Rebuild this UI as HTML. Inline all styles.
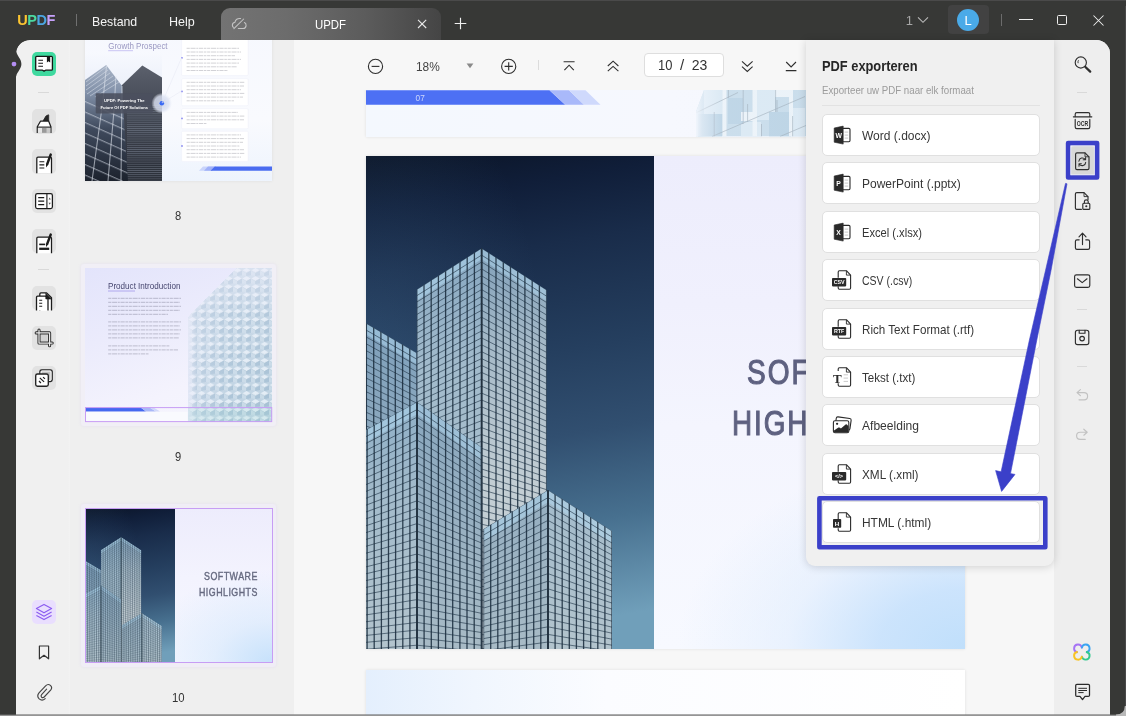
<!DOCTYPE html>
<html lang="nl">
<head>
<meta charset="utf-8">
<title>UPDF</title>
<style>
*{box-sizing:border-box;margin:0;padding:0}
html,body{width:1126px;height:716px;overflow:hidden;background:#373836}
body{font-family:"Liberation Sans",sans-serif;position:relative;color:#222}
#win{will-change:transform;position:absolute;left:0;top:0;width:1126px;height:716px;background:#373836;overflow:hidden}
.t{position:absolute;white-space:nowrap;line-height:1;transform-origin:0 0;display:block}
svg{position:absolute;overflow:visible}
.a{position:absolute}
/* title bar */
#tab{position:absolute;left:221px;top:8px;width:220px;height:32px;border-radius:9px 9px 0 0;background:linear-gradient(90deg,#737373 0%,#6c6c6c 30%,#5c5c5c 65%,#454545 100%)}
/* content */
#content{position:absolute;left:16px;top:40px;width:1094px;height:675px;background:#f7f7f7;border-radius:14px 14px 0 0;overflow:hidden}
#ltool{position:absolute;left:16px;top:40px;width:54px;height:675px;background:#f0f0f0;border-radius:14px 0 0 0}
#thumbs{position:absolute;left:70px;top:40px;width:224px;height:675px;background:#efefef;overflow:hidden}
#main{position:absolute;left:294px;top:40px;width:761px;height:675px;background:#f7f7f7;overflow:hidden}
#rtool{position:absolute;left:1054px;top:40px;width:56px;height:675px;background:#eeeeee;border-radius:0 14px 0 0}
.ib{position:absolute;left:32px;width:24px;height:24px;border-radius:5px;background:#e2e2e2}
.sep{position:absolute;height:1px;background:#d9d9d9}
/* export panel */
#panel{position:absolute;left:806px;top:40px;width:248px;height:526px;background:#f0f0f0;border-radius:0 0 9px 9px;box-shadow:0 1px 8px rgba(0,0,0,.16)}
.it{position:absolute;left:822px;width:218px;height:42px;background:#fff;border:1px solid #e0e0e0;border-radius:5px}
.pg{position:absolute;left:366px;width:599px;background:#fff;box-shadow:0 0 3px rgba(0,0,0,.10)}
</style>
</head>
<body>
<div id="win">
<!-- title bar -->
<div class="a" style="left:0;top:0;width:1126px;height:1px;background:#4a4a4a"></div>
<div class="t" style="left:17.3px;top:12.9px;font-size:14.5px;font-weight:bold;letter-spacing:-.45px"><span style="color:#fcc531">U</span><span style="color:#4bd8a0">P</span><span style="color:#4ba6e2">D</span><span style="color:#c7a1fb">F</span></div>
<div class="a" style="left:76px;top:14px;width:1px;height:12px;background:#707070"></div>
<div class="t" style="left:92.30px;top:15.10px;font-size:13px;color:#f4f4f4;transform:scaleX(0.9475);">Bestand</div>
<div class="t" style="left:168.70px;top:15.10px;font-size:13px;color:#f4f4f4;transform:scaleX(0.9649);">Help</div>
<div id="tab"></div>
<svg style="left:231px;top:17px" width="16" height="13" viewBox="231 17 16 13"><g fill="none" stroke="#c4c4c4" stroke-width="1.05" stroke-linecap="round"><path d="M240.6 18.5C237.6 18 235.3 19.7 234.9 22.3C233.2 22.7 232.2 24 232.4 25.6C232.5 26.4 232.9 27 233.4 27.4"/><path d="M244.4 22.6C245.6 23.1 246.2 24.3 246.1 25.6C245.9 27.3 244.7 28.5 243.2 28.5H238.3"/><path d="M243.7 19L233.9 28.7"/></g></svg>
<div class="t" style="left:315.20px;top:17.80px;font-size:13px;color:#ffffff;transform:scaleX(0.8760);">UPDF</div>
<svg style="left:417px;top:19px" width="10" height="10" viewBox="0 0 10 10"><path d="M1 .8L9.2 9M9.2 .8L1 9" stroke="#e8e8e8" stroke-width="1.1" fill="none"/></svg>
<svg style="left:454px;top:17px" width="13" height="13" viewBox="0 0 13 13"><path d="M6.5 .7V12.3M.7 6.5H12.3" stroke="#f0f0f0" stroke-width="1.15" fill="none"/></svg>
<div class="t" style="left:905.80px;top:13.60px;font-size:13px;color:#a6a6a6;">1</div>
<svg style="left:917px;top:16px" width="12" height="8" viewBox="0 0 12 8"><path d="M1 1.3L6 6.3L11 1.3" stroke="#b8b8b8" stroke-width="1.1" fill="none"/></svg>
<div class="a" style="left:948px;top:5px;width:41px;height:29px;border-radius:4px;background:#424242"></div>
<div class="a" style="left:957px;top:9px;width:22px;height:22px;border-radius:11px;background:#4aaae8"></div>
<div class="t" style="left:964.60px;top:13.60px;font-size:13px;color:#ffffff;">L</div>
<div class="a" style="left:1001px;top:14px;width:1px;height:12px;background:#6c6c6c"></div>
<div class="a" style="left:1019px;top:19px;width:14px;height:1px;background:#efefef"></div>
<div class="a" style="left:1057px;top:15px;width:10px;height:10px;border:1px solid #eee;border-radius:1.5px"></div>
<svg style="left:1093px;top:15px" width="11" height="11" viewBox="0 0 11 11"><path d="M.5 .5L10.5 10.5M10.5 .5L.5 10.5" stroke="#eee" stroke-width="1.05" fill="none"/></svg>
<!-- content bg -->
<div id="content"></div>
<!-- left toolbar -->
<div id="ltool"></div>
<div class="a" style="left:68px;top:40px;width:5px;height:675px;background:linear-gradient(90deg,#f0f0f0,#f3f3f3 50%,#efefef)"></div>
<div class="ib" style="top:52px;background:#3fd99f"></div>
<div class="sep" style="left:38px;top:92px;width:11px"></div>
<div class="ib" style="top:109px;height:25px"></div>
<div class="ib" style="top:149px;height:25px"></div>
<div class="ib" style="top:189px"></div>
<div class="ib" style="top:229px"></div>
<div class="sep" style="left:38px;top:269px;width:11px"></div>
<div class="ib" style="top:286px"></div>
<div class="ib" style="top:326px"></div>
<div class="ib" style="top:366px"></div>
<div class="ib" style="top:600px;background:#e9defe"></div>
<svg style="left:0;top:0" width="80" height="716" viewBox="0 0 80 716">
<path d="M14 40H30C22.5 40.3 17.6 44.6 16.3 51.6C17.2 56.4 21.4 59 21.4 64C21.4 69 17.2 71.6 16.2 76.2L14 76Z" fill="#373836"/>
<circle cx="14" cy="64.1" r="2.4" fill="#b48ef3"/>
<!-- reader (open book) -->
<path d="M35.7 57.3Q35.7 56.3 36.7 56.3H51.4Q52.4 56.3 52.4 57.3V69.2Q52.4 70.2 51.4 70.2H45.6L44.05 71.1L42.5 70.2H36.7Q35.7 70.2 35.7 69.2Z" fill="#fff" stroke="#151515" stroke-width="1.3" stroke-linejoin="round"/>
<path d="M38.3 60.2H43M38.3 63.2H43M38.3 66.2H43" stroke="#151515" stroke-width="1.15"/>
<path d="M46.9 56.3H50.2V62.6L48.55 61.2L46.9 62.6Z" fill="#151515"/>
<!-- highlighter -->
<g transform="translate(0 -0.5)">
<path d="M43 121.6L45.9 116.6L48.3 115.3Q48.7 115.2 48.7 115.7V121.6Z" fill="#262626" stroke="#262626" stroke-width=".8" stroke-linejoin="round"/>
<path d="M37.3 133.4V127.2L40.6 121.5H48.6L50.9 127.2V133.4" fill="#fff" stroke="#1c1c1c" stroke-width="1.25" stroke-linejoin="round"/>
<path d="M37.9 128.2H50.3V133.4H37.9Z" fill="#9a9a9a"/>
<path d="M37.9 128.2H42V133.4H37.9Z" fill="#e6e6e6"/><path d="M46.5 128.2H50.3V133.4H46.5Z" fill="#c9c9c9"/>
<path d="M37.3 127.6H50.9" stroke="#1c1c1c" stroke-width="1.1"/>
</g>
<!-- edit -->
<g transform="translate(0 -0.4)">
<path d="M36.8 173.6V158.6Q36.8 157.4 38 157.4H50.3Q51.5 157.4 51.5 158.6V173.6" fill="#fff" stroke="#1c1c1c" stroke-width="1.25"/>
<path d="M39.4 162.2H44.3M39.4 165.3H44.3M39.4 168.4H44.3" stroke="#1c1c1c" stroke-width="1.1"/>
<path d="M50.7 155L47.3 164.3" stroke="#1c1c1c" stroke-width="2.5" stroke-linecap="round"/>
<path d="M46.1 164L48.4 164.9L46 167.8Z" fill="#1c1c1c"/>
</g>
<!-- organise -->
<rect x="35.6" y="193.6" width="16.8" height="15" rx="1.8" fill="#fff" stroke="#1c1c1c" stroke-width="1.25"/>
<path d="M46.9 193.6V208.6" stroke="#1c1c1c" stroke-width="1.1"/>
<path d="M38.2 197.6H44.2M38.2 201.1H44.2M38.2 204.6H44.2" stroke="#1c1c1c" stroke-width="1.1"/>
<path d="M48.6 199.6L49.7 197.6L50.8 199.6ZM48.6 202.8L49.7 204.8L50.8 202.8Z" fill="#555"/>
<!-- form/sign -->
<path d="M36.8 253.2V238.2Q36.8 237 38 237H50.3Q51.5 237 51.5 238.2V253.2" fill="#fff" stroke="#1c1c1c" stroke-width="1.25"/>
<path d="M39.2 244.4H45.2" stroke="#1c1c1c" stroke-width="1.6"/>
<path d="M39.2 248.8H49.2" stroke="#1c1c1c" stroke-width="2.3"/>
<path d="M50.7 234.6L47.3 243.6" stroke="#1c1c1c" stroke-width="2.5" stroke-linecap="round"/>
<path d="M46.1 243.3L48.4 244.2L46 247.1Z" fill="#1c1c1c"/>
<!-- pages -->
<path d="M39.8 310.4V294Q39.8 292.9 40.9 292.9H46.6L51.5 297.8V310.4" fill="#fff" stroke="#1c1c1c" stroke-width="1.3" stroke-linejoin="round"/>
<path d="M36.5 310.4V297.2Q36.5 296.1 37.6 296.1H45.6L48 298.8V310.4" fill="#fff" stroke="#1c1c1c" stroke-width="1.3" stroke-linejoin="round"/>
<path d="M39.2 300.2H42.2M39.2 303.2H42.2M39.2 306.2H42.2" stroke="#1c1c1c" stroke-width="1.15"/>
<path d="M45.8 293.2L51.4 299H45.8Z" fill="#1c1c1c" stroke="#1c1c1c" stroke-width=".6" stroke-linejoin="round"/>
<!-- crop -->
<g fill="none" stroke-linecap="round" stroke-linejoin="round">
<path d="M41 334.9H47.6V341H41Z" fill="#d2d2d2"/>
<path d="M36.2 332.9H49.6V345.8M39 330V343H52.2" stroke="#2a2a2a" stroke-width="3.1"/>
<path d="M36.2 332.9H49.6V345.8M39 330V343H52.2" stroke="#e8e8e8" stroke-width="1.25"/>
</g>
<!-- watermark/layers -->
<rect x="39.9" y="369.8" width="12.3" height="11.8" rx="1.8" fill="#c4c4c4" stroke="#222" stroke-width="1.3"/>
<rect x="41.1" y="371" width="9.9" height="9.4" rx="1" fill="none" stroke="#fff" stroke-width="1"/>
<rect x="35.7" y="374" width="12.6" height="12.2" rx="1.8" fill="#fff" stroke="#222" stroke-width="1.35"/>
<path d="M43.1 377.1L44.9 378.9M39.8 377.9L44.1 381.9M39 381L40.9 383" stroke="#222" stroke-width="1.25"/>
<!-- layers (purple) -->
<g fill="none" stroke="#8b5cf0" stroke-width="1.15" stroke-linejoin="round">
<path d="M44 604.4L51.6 608.6L44 612.8L36.4 608.6Z"/><path d="M36.4 612L44 616.2L51.6 612"/><path d="M36.4 615.4L44 619.6L51.6 615.4"/></g>
<!-- bookmark -->
<path d="M39.4 646H48.6V658.8L44 655.3L39.4 658.8Z" fill="none" stroke="#333" stroke-width="1.2" stroke-linejoin="round"/>
<!-- paperclip -->
<path d="M46.6 689.2L41.6 694.6Q40.4 696 41.6 697.2Q42.9 698.2 44.2 697L50.6 690.2Q52.8 687.6 50.4 685.4Q48 683.4 45.6 685.8L39 692.8Q36.4 696 39.2 698.9Q42.2 701.4 45.2 698.6" fill="none" stroke="#444" stroke-width="1.15" stroke-linecap="round"/>
</svg>
<!-- thumbnails -->
<div id="thumbs"><div class="a" style="left:-70px;top:-40px;width:1126px;height:716px">
<!-- thumb 8 -->
<div class="a" style="left:85px;top:27px;width:187px;height:154px;background:linear-gradient(180deg,#f6f8fe 0%,#f9fafe 60%,#eef4fd 100%);box-shadow:0 0 3px rgba(0,0,0,.08)"></div>
<svg style="left:0;top:0" width="300" height="200" viewBox="0 0 300 200">
<defs>
<linearGradient id="t8sky" x1="0" y1="0" x2="0" y2="1"><stop offset="0" stop-color="#f7f9fe"/><stop offset=".14" stop-color="#f1f4fc"/><stop offset=".5" stop-color="#e4eaf5"/><stop offset="1" stop-color="#cfd8e6"/></linearGradient>
<linearGradient id="t8a" x1="0" y1="0" x2="0" y2="1"><stop offset="0" stop-color="#a9b5c8"/><stop offset=".25" stop-color="#7f8ea6"/><stop offset=".55" stop-color="#3f4a5d"/><stop offset="1" stop-color="#1c222d"/></linearGradient>
<linearGradient id="t8b" x1="0" y1="0" x2="0" y2="1"><stop offset="0" stop-color="#5b606c"/><stop offset=".35" stop-color="#454a56"/><stop offset="1" stop-color="#262a33"/></linearGradient>
<pattern id="t8h" width="4" height="2.1" patternUnits="userSpaceOnUse"><rect width="4" height=".8" fill="#7d8696" opacity=".55"/></pattern>
<pattern id="t8g" width="12.5" height="10.5" patternUnits="userSpaceOnUse" patternTransform="skewY(24)"><rect width="12.5" height="1.3" fill="#dfe6f0" opacity=".5"/></pattern>
<radialGradient id="t8c"><stop offset="0" stop-color="#c9d2ea" stop-opacity=".95"/><stop offset=".7" stop-color="#dde3f3" stop-opacity=".8"/><stop offset="1" stop-color="#eef1fa" stop-opacity="0"/></radialGradient>
<clipPath id="t8clip"><rect x="85" y="52" width="77" height="129"/></clipPath>
</defs>
<rect x="85" y="52" width="77" height="129" fill="url(#t8sky)"/>
<g clip-path="url(#t8clip)">
<polygon points="142.3,65.4 121.5,85.5 121.5,181 162,181 162,77.5" fill="url(#t8b)"/>
<polygon points="127,104 162,104 162,181 127,181" fill="url(#t8h)"/>
<polygon points="106.2,65 85,80 85,181 128,181 122,86" fill="url(#t8a)"/>
<polygon points="85,92 123,110 128,181 85,181" fill="url(#t8g)"/>
<path d="M106.5 66L103 100L92 181M116 76L114 110L108 181M122 86L121 181" stroke="#e3e8f0" stroke-width="1.1" opacity=".6" fill="none"/>
<path d="M86 82L106 67M86 86L108 70M86 90L110 73M87 94L113 76M90 96L116 79M95 97L119 82" stroke="#d5dce8" stroke-width=".7" opacity=".8" fill="none"/>
</g>
<rect x="95.7" y="93.3" width="57" height="20.2" rx="1" fill="#4b505f" opacity=".88"/>
<circle cx="161.8" cy="103.3" r="10.5" fill="url(#t8c)"/>
<circle cx="161.8" cy="103.3" r="2.3" fill="#3a6af4"/>
<text x="124.2" y="102.2" text-anchor="middle" font-family="Liberation Sans, sans-serif" font-weight="bold" font-size="4.1" fill="#fff">UPDF: Powering The</text>
<text x="124.2" y="108.6" text-anchor="middle" font-family="Liberation Sans, sans-serif" font-weight="bold" font-size="4.1" fill="#fff">Future Of PDF Solutions</text>
<text x="108.2" y="49.2" font-family="Liberation Sans, sans-serif" font-size="8.3" fill="#9a98c2" textLength="59.4" lengthAdjust="spacingAndGlyphs">Growth Prospect</text>
<path d="M108.2 50.7H133" stroke="#c4bff2" stroke-width=".9"/>
<!-- cards -->
<g fill="#fff" stroke="#eef0f8" stroke-width=".6">
<rect x="181.6" y="38" width="66.6" height="37.6" rx="1.2"/><rect x="181.6" y="78.6" width="66.6" height="27.2" rx="1.2"/><rect x="181.6" y="108.6" width="66.6" height="20.2" rx="1.2"/><rect x="181.6" y="131.2" width="66.6" height="30.2" rx="1.2"/></g>
<g stroke="#5d5d6c" stroke-width=".55" opacity=".5" fill="none" stroke-dasharray="3.2 .7 5.1 .7 1.9 .7 4.2 .7 2.6 .7">
<path d="M186.6 48.3H239M186.6 52H241M186.6 55.7H235M186.6 59.4H241M186.6 63.1H239M186.6 66.8H237M186.6 70.5H228"/>
<path d="M186.6 82.3H245M186.6 86H244M186.6 89.7H241M186.6 93.4H245M186.6 97.1H243M186.6 100.8H234"/>
<path d="M186.6 112.4H238M186.6 116.1H245M186.6 119.8H244M186.6 123.5H207"/>
<path d="M186.6 134.9H241M186.6 138.6H244M186.6 142.3H243M186.6 146H240M186.6 149.7H244M186.6 153.4H245M186.6 157.1H241"/>
</g>
<g fill="#8c8cf0"><circle cx="182" cy="57.8" r=".9"/><circle cx="182" cy="91.4" r=".9"/><circle cx="182" cy="118.4" r=".9"/><circle cx="182" cy="146" r=".9"/></g>
<path d="M162 103L181.5 58M162 103L181.5 91" stroke="#e4e6f2" stroke-width=".5" fill="none"/>
<!-- blue bar -->
<polygon points="203,166.6 215,166.6 211,170.8 199,170.8" fill="#c9d4fb"/>
<polygon points="208,166.6 216,166.6 212,170.8 204,170.8" fill="#9fb0f8"/>
<polygon points="214.8,166.6 272,166.6 272,170.8 210.6,170.8" fill="#4a6cf0"/>
</svg>
<div class="t" style="left:175.00px;top:209.94px;font-size:12px;color:#333;transform:scaleX(0.9290);">8</div>
<!-- thumb 9 -->
<div class="a" style="left:81px;top:264px;width:195px;height:162px;border-radius:3px;background:#f1eff6;box-shadow:0 0 3px rgba(200,180,240,.25)"></div>
<div class="a" style="left:85px;top:268px;width:187px;height:154px;background:linear-gradient(160deg,#e3e4fb 0%,#ebebfc 35%,#f4f3fd 70%,#f6f6fe 100%)"></div>
<svg style="left:0;top:0" width="300" height="440" viewBox="0 0 300 440">
<defs>
<linearGradient id="t9g" x1="0" y1="0" x2="1" y2="0"><stop offset="0" stop-color="#c3d5e3" stop-opacity=".0"/><stop offset=".12" stop-color="#bfd2e1" stop-opacity=".85"/><stop offset="1" stop-color="#a9c3d6"/></linearGradient>
<pattern id="t9p" width="9" height="8.2" patternUnits="userSpaceOnUse" patternTransform="translate(188 268)">
<rect width="9" height="8.2" fill="#bdd2e1"/><polygon points="0,2.4 4.5,0 9,2.4 4.5,4.8" fill="#e3edf5"/><polygon points="0,2.4 4.5,4.8 4.5,8.2 0,7.2" fill="#c6d9e6"/><polygon points="9,2.4 4.5,4.8 4.5,8.2 9,7.2" fill="#a5c0d4"/><path d="M0 2.4L4.5 4.8L9 2.4M4.5 4.8V8.2" stroke="#93b0c6" stroke-width=".35" fill="none" opacity=".7"/>
</pattern>
<linearGradient id="t9f" x1="0" y1="0" x2="1" y2="0"><stop offset="0" stop-color="#eeeefc" stop-opacity=".75"/><stop offset=".1" stop-color="#eeeefc" stop-opacity=".3"/><stop offset=".45" stop-color="#eeeefc" stop-opacity=".08"/><stop offset="1" stop-color="#eeeefc" stop-opacity="0"/></linearGradient>
<linearGradient id="t9v" x1="0" y1="0" x2="0" y2="1"><stop offset="0" stop-color="#efeefc" stop-opacity=".55"/><stop offset=".3" stop-color="#efeefc" stop-opacity=".2"/><stop offset="1" stop-color="#e9eafc" stop-opacity="0"/></linearGradient>
</defs>
<polygon points="237,268 272,268 272,422 188,422 188,318 191.5,313.5" fill="url(#t9p)"/>
<polygon points="237,268 272,268 272,422 188,422 188,318 191.5,313.5" fill="url(#t9f)"/>
<polygon points="237,268 272,268 272,422 188,422 188,318 191.5,313.5" fill="url(#t9v)"/>
<rect x="188" y="408" width="84" height="14" fill="#a6dcd6" opacity=".22"/>
<text x="108" y="289.2" font-family="Liberation Sans, sans-serif" font-size="9.2" fill="#46466f" textLength="72.4" lengthAdjust="spacingAndGlyphs">Product Introduction</text>
<path d="M108 291H135" stroke="#a9a0ec" stroke-width=".9"/>
<g stroke="#55556c" stroke-width=".55" opacity=".6" fill="none" stroke-dasharray="3.2 .7 5.1 .7 1.9 .7 4.2 .7 2.6 .7">
<path d="M108.2 298.3H181M108.2 302.3H180M108.2 306.3H181M108.2 310.3H180M108.2 314.3H168"/>
<path d="M108.2 321.9H181M108.2 325.9H180M108.2 329.9H181M108.2 333.9H180M108.2 337.9H179"/>
<path d="M108.2 345.9H170M108.2 349.9H178M108.2 353.9H149"/>
</g>
<polygon points="85,407.8 141,407.8 146,411.6 85,411.6" fill="#4468f0"/>
<polygon points="141,407.8 150,407.8 156,411.6 146,411.6" fill="#a9b8f8"/><polygon points="150,407.8 154,407.8 160,411.6 156,411.6" fill="#d0d8fb"/>
<rect x="85.5" y="411.9" width="102" height="9.6" fill="#f9fafe"/>
<rect x="85.5" y="407.6" width="186.2" height="14" fill="none" stroke="#c79df4" stroke-width="1"/>
</svg>
<div class="t" style="left:175.00px;top:450.94px;font-size:12px;color:#333;transform:scaleX(0.9290);">9</div>
<!-- thumb 10 -->
<div class="a" style="left:81px;top:504px;width:195px;height:163px;border-radius:3px;background:#f0edf6;box-shadow:0 0 3px rgba(200,180,240,.25)"></div>
<div class="a" style="left:85px;top:508px;width:187px;height:155px;background:radial-gradient(ellipse 70% 60% at 100% 100%,#c6e1fb 0%,rgba(214,232,252,.6) 45%,rgba(240,244,254,0) 100%),linear-gradient(180deg,#edecfc 0%,#f3f3fe 45%,#f6f8ff 100%)"></div>
<svg style="left:85px;top:508px;overflow:hidden" width="90" height="155" viewBox="0 0 288 493" preserveAspectRatio="none"><defs>
<linearGradient id="t_sky" x1="0.1" y1="0" x2="0.2" y2="1">
<stop offset="0" stop-color="#0b1528"/><stop offset=".1" stop-color="#101e39"/><stop offset=".23" stop-color="#192c4a"/><stop offset=".45" stop-color="#253f5f"/><stop offset=".62" stop-color="#314f70"/><stop offset=".8" stop-color="#47708f"/><stop offset="1" stop-color="#709fba"/>
</linearGradient>
<radialGradient id="t_skyl" cx="0" cy="0.42" r="0.62" gradientTransform="scale(1 1)"><stop offset="0" stop-color="#5d93bd" stop-opacity=".2"/><stop offset=".5" stop-color="#5d93bd" stop-opacity=".1"/><stop offset="1" stop-color="#5d93bd" stop-opacity="0"/></radialGradient>
<linearGradient id="t_fa" gradientUnits="userSpaceOnUse" x1="0" y1="90" x2="0" y2="493"><stop offset="0" stop-color="#86a6c0"/><stop offset=".3" stop-color="#a2bbcc"/><stop offset="1" stop-color="#afc1cb"/></linearGradient>
<linearGradient id="t_fb" gradientUnits="userSpaceOnUse" x1="0" y1="90" x2="0" y2="493"><stop offset="0" stop-color="#809fb9"/><stop offset=".25" stop-color="#a6bac8"/><stop offset=".6" stop-color="#c3ced4"/><stop offset="1" stop-color="#c6d0d5"/></linearGradient>
<linearGradient id="t_fc" gradientUnits="userSpaceOnUse" x1="0" y1="240" x2="0" y2="493"><stop offset="0" stop-color="#8daec6"/><stop offset=".4" stop-color="#a3bbcb"/><stop offset="1" stop-color="#b3c4cd"/></linearGradient>
<linearGradient id="t_fd" gradientUnits="userSpaceOnUse" x1="0" y1="160" x2="0" y2="493"><stop offset="0" stop-color="#7d9fbb"/><stop offset=".5" stop-color="#93adc0"/><stop offset="1" stop-color="#a8bbc6"/></linearGradient>
<clipPath id="t_c_b0"><polygon points="-14.0,159.0 -36.0,174.0 -36.0,495.0 -14.0,495.0"/><polygon points="-14.0,159.0 51.0,197.0 51.0,495.0 -14.0,495.0"/></clipPath><clipPath id="t_c_b1"><polygon points="115.6,92.2 50.8,133.5 50.8,495.0 115.6,495.0"/><polygon points="115.6,92.2 180.6,134.0 180.6,495.0 115.6,495.0"/></clipPath><clipPath id="t_c_b2"><polygon points="51.0,246.0 -6.0,277.0 -6.0,495.0 51.0,495.0"/><polygon points="51.0,246.0 115.3,291.0 115.3,495.0 51.0,495.0"/></clipPath><clipPath id="t_c_b3"><polygon points="182.0,334.0 117.5,373.0 117.5,495.0 182.0,495.0"/><polygon points="182.0,334.0 246.0,375.0 246.0,495.0 182.0,495.0"/></clipPath></defs><rect width="288" height="493" fill="url(#t_sky)"/><rect width="288" height="493" fill="url(#t_skyl)"/><g clip-path="url(#t_c_b0)"><g><polygon points="-14.0,159.0 -36.0,174.0 -36.0,495.0 -14.0,495.0" fill="url(#t_fd)"/><polygon points="-14.0,159.0 51.0,197.0 51.0,495.0 -14.0,495.0" fill="url(#t_fd)"/><polygon points="-14.0,159.0 -36.0,174.0 -36.0,185.2 -14.0,170.2" fill="#b4dcf4" opacity=".5"/><polygon points="-14.0,159.0 51.0,197.0 51.0,208.2 -14.0,170.2" fill="#b4dcf4" opacity=".45"/><path d="M-14.0 159.0L-36.0 174.0M-14.0 166.0L-36.0 180.7M-14.0 173.0L-36.0 187.4M-14.0 180.0L-36.0 194.2M-14.0 187.0L-36.0 200.9M-14.0 194.0L-36.0 207.6M-14.0 201.0L-36.0 214.3M-14.0 208.0L-36.0 221.0M-14.0 215.0L-36.0 227.7M-14.0 222.0L-36.0 234.5M-14.0 229.0L-36.0 241.2M-14.0 236.0L-36.0 247.9M-14.0 243.0L-36.0 254.6M-14.0 250.0L-36.0 261.3M-14.0 257.0L-36.0 268.0M-14.0 264.0L-36.0 274.8M-14.0 271.0L-36.0 281.5M-14.0 278.0L-36.0 288.2M-14.0 285.0L-36.0 294.9M-14.0 292.0L-36.0 301.6M-14.0 299.0L-36.0 308.3M-14.0 306.0L-36.0 315.1M-14.0 313.0L-36.0 321.8M-14.0 320.0L-36.0 328.5M-14.0 327.0L-36.0 335.2M-14.0 334.0L-36.0 341.9M-14.0 341.0L-36.0 348.6M-14.0 348.0L-36.0 355.4M-14.0 355.0L-36.0 362.1M-14.0 362.0L-36.0 368.8M-14.0 369.0L-36.0 375.5M-14.0 376.0L-36.0 382.2M-14.0 383.0L-36.0 388.9M-14.0 390.0L-36.0 395.7M-14.0 397.0L-36.0 402.4M-14.0 404.0L-36.0 409.1M-14.0 411.0L-36.0 415.8M-14.0 418.0L-36.0 422.5M-14.0 425.0L-36.0 429.2M-14.0 432.0L-36.0 436.0M-14.0 439.0L-36.0 442.7M-14.0 446.0L-36.0 449.4M-14.0 453.0L-36.0 456.1M-14.0 460.0L-36.0 462.8M-14.0 467.0L-36.0 469.5M-14.0 474.0L-36.0 476.3M-14.0 481.0L-36.0 483.0M-14.0 488.0L-36.0 489.7M-14.0 495.0L-36.0 496.4M-14.0 502.0L-36.0 503.1M-14.0 509.0L-36.0 509.8" stroke="#283e50" stroke-width=".95" opacity=".7" fill="none"/><path d="M-14.0 159.0L51.0 197.0M-14.0 166.0L51.0 203.3M-14.0 173.0L51.0 209.6M-14.0 180.0L51.0 215.8M-14.0 187.0L51.0 222.1M-14.0 194.0L51.0 228.4M-14.0 201.0L51.0 234.7M-14.0 208.0L51.0 241.0M-14.0 215.0L51.0 247.3M-14.0 222.0L51.0 253.5M-14.0 229.0L51.0 259.8M-14.0 236.0L51.0 266.1M-14.0 243.0L51.0 272.4M-14.0 250.0L51.0 278.7M-14.0 257.0L51.0 285.0M-14.0 264.0L51.0 291.2M-14.0 271.0L51.0 297.5M-14.0 278.0L51.0 303.8M-14.0 285.0L51.0 310.1M-14.0 292.0L51.0 316.4M-14.0 299.0L51.0 322.7M-14.0 306.0L51.0 328.9M-14.0 313.0L51.0 335.2M-14.0 320.0L51.0 341.5M-14.0 327.0L51.0 347.8M-14.0 334.0L51.0 354.1M-14.0 341.0L51.0 360.4M-14.0 348.0L51.0 366.6M-14.0 355.0L51.0 372.9M-14.0 362.0L51.0 379.2M-14.0 369.0L51.0 385.5M-14.0 376.0L51.0 391.8M-14.0 383.0L51.0 398.1M-14.0 390.0L51.0 404.3M-14.0 397.0L51.0 410.6M-14.0 404.0L51.0 416.9M-14.0 411.0L51.0 423.2M-14.0 418.0L51.0 429.5M-14.0 425.0L51.0 435.8M-14.0 432.0L51.0 442.0M-14.0 439.0L51.0 448.3M-14.0 446.0L51.0 454.6M-14.0 453.0L51.0 460.9M-14.0 460.0L51.0 467.2M-14.0 467.0L51.0 473.5M-14.0 474.0L51.0 479.7M-14.0 481.0L51.0 486.0M-14.0 488.0L51.0 492.3M-14.0 495.0L51.0 498.6M-14.0 502.0L51.0 504.9M-14.0 509.0L51.0 511.2M-14.0 516.0L51.0 517.4M-14.0 523.0L51.0 523.7M-14.0 530.0L51.0 530.0" stroke="#283e50" stroke-width=".95" opacity=".7" fill="none"/><path d="M-14.0 159.0V495.0M-21.3 162.5V495.0M-28.7 167.5V495.0M-36.0 174.0V495.0" stroke="#1a2c3d" stroke-width="1.3" opacity=".88" fill="none"/><path d="M-14.0 159.0V495.0M-6.8 161.7V495.0M0.4 165.9V495.0M7.7 170.2V495.0M14.9 174.4V495.0M22.1 178.6V495.0M29.3 182.8V495.0M36.6 187.1V495.0M43.8 191.3V495.0M51.0 197.0V495.0" stroke="#1a2c3d" stroke-width="1.3" opacity=".88" fill="none"/><path d="M-14.0 158.0V495" stroke="#22313f" stroke-width="1.6"/></g></g><g clip-path="url(#t_c_b1)"><g><polygon points="115.6,92.2 50.8,133.5 50.8,495.0 115.6,495.0" fill="url(#t_fa)"/><polygon points="115.6,92.2 180.6,134.0 180.6,495.0 115.6,495.0" fill="url(#t_fb)"/><polygon points="115.6,92.2 50.8,133.5 50.8,144.5 115.6,103.2" fill="#b4dcf4" opacity=".5"/><polygon points="115.6,92.2 180.6,134.0 180.6,145.0 115.6,103.2" fill="#b4dcf4" opacity=".45"/><path d="M115.6 92.2L50.8 133.5M115.6 99.1L50.8 139.7M115.6 106.0L50.8 146.0M115.6 112.9L50.8 152.2M115.6 119.8L50.8 158.5M115.6 126.7L50.8 164.7M115.6 133.6L50.8 171.0M115.6 140.5L50.8 177.2M115.6 147.4L50.8 183.5M115.6 154.3L50.8 189.7M115.6 161.2L50.8 196.0M115.6 168.1L50.8 202.2M115.6 175.0L50.8 208.5M115.6 181.9L50.8 214.7M115.6 188.8L50.8 221.0M115.6 195.7L50.8 227.2M115.6 202.6L50.8 233.5M115.6 209.5L50.8 239.7M115.6 216.4L50.8 246.0M115.6 223.3L50.8 252.2M115.6 230.2L50.8 258.5M115.6 237.1L50.8 264.7M115.6 244.0L50.8 271.0M115.6 250.9L50.8 277.2M115.6 257.8L50.8 283.5M115.6 264.7L50.8 289.7M115.6 271.6L50.8 296.0M115.6 278.5L50.8 302.2M115.6 285.4L50.8 308.5M115.6 292.3L50.8 314.7M115.6 299.2L50.8 321.0M115.6 306.1L50.8 327.2M115.6 313.0L50.8 333.5M115.6 319.9L50.8 339.7M115.6 326.8L50.8 346.0M115.6 333.7L50.8 352.2M115.6 340.6L50.8 358.5M115.6 347.5L50.8 364.7M115.6 354.4L50.8 371.0M115.6 361.3L50.8 377.2M115.6 368.2L50.8 383.5M115.6 375.1L50.8 389.7M115.6 382.0L50.8 396.0M115.6 388.9L50.8 402.2M115.6 395.8L50.8 408.5M115.6 402.7L50.8 414.7M115.6 409.6L50.8 421.0M115.6 416.5L50.8 427.2M115.6 423.4L50.8 433.5M115.6 430.3L50.8 439.7M115.6 437.2L50.8 446.0M115.6 444.1L50.8 452.2M115.6 451.0L50.8 458.5M115.6 457.9L50.8 464.7M115.6 464.8L50.8 471.0M115.6 471.7L50.8 477.2M115.6 478.6L50.8 483.4M115.6 485.5L50.8 489.7M115.6 492.4L50.8 495.9M115.6 499.3L50.8 502.2M115.6 506.2L50.8 508.4M115.6 513.1L50.8 514.7M115.6 520.0L50.8 520.9M115.6 526.9L50.8 527.2M115.6 533.8L50.8 533.8" stroke="#283e50" stroke-width=".95" opacity=".7" fill="none"/><path d="M115.6 92.2L180.6 134.0M115.6 99.1L180.6 140.2M115.6 106.0L180.6 146.5M115.6 112.9L180.6 152.7M115.6 119.8L180.6 159.0M115.6 126.7L180.6 165.2M115.6 133.6L180.6 171.4M115.6 140.5L180.6 177.7M115.6 147.4L180.6 183.9M115.6 154.3L180.6 190.2M115.6 161.2L180.6 196.4M115.6 168.1L180.6 202.7M115.6 175.0L180.6 208.9M115.6 181.9L180.6 215.1M115.6 188.8L180.6 221.4M115.6 195.7L180.6 227.6M115.6 202.6L180.6 233.9M115.6 209.5L180.6 240.1M115.6 216.4L180.6 246.3M115.6 223.3L180.6 252.6M115.6 230.2L180.6 258.8M115.6 237.1L180.6 265.1M115.6 244.0L180.6 271.3M115.6 250.9L180.6 277.5M115.6 257.8L180.6 283.8M115.6 264.7L180.6 290.0M115.6 271.6L180.6 296.3M115.6 278.5L180.6 302.5M115.6 285.4L180.6 308.8M115.6 292.3L180.6 315.0M115.6 299.2L180.6 321.2M115.6 306.1L180.6 327.5M115.6 313.0L180.6 333.7M115.6 319.9L180.6 340.0M115.6 326.8L180.6 346.2M115.6 333.7L180.6 352.4M115.6 340.6L180.6 358.7M115.6 347.5L180.6 364.9M115.6 354.4L180.6 371.2M115.6 361.3L180.6 377.4M115.6 368.2L180.6 383.6M115.6 375.1L180.6 389.9M115.6 382.0L180.6 396.1M115.6 388.9L180.6 402.4M115.6 395.8L180.6 408.6M115.6 402.7L180.6 414.9M115.6 409.6L180.6 421.1M115.6 416.5L180.6 427.3M115.6 423.4L180.6 433.6M115.6 430.3L180.6 439.8M115.6 437.2L180.6 446.1M115.6 444.1L180.6 452.3M115.6 451.0L180.6 458.5M115.6 457.9L180.6 464.8M115.6 464.8L180.6 471.0M115.6 471.7L180.6 477.3M115.6 478.6L180.6 483.5M115.6 485.5L180.6 489.7M115.6 492.4L180.6 496.0M115.6 499.3L180.6 502.2M115.6 506.2L180.6 508.5M115.6 513.1L180.6 514.7M115.6 520.0L180.6 521.0M115.6 526.9L180.6 527.2M115.6 533.8L180.6 533.8" stroke="#283e50" stroke-width=".95" opacity=".7" fill="none"/><path d="M115.6 92.2V495.0M108.4 95.3V495.0M101.2 99.9V495.0M94.0 104.5V495.0M86.8 109.1V495.0M79.6 113.6V495.0M72.4 118.2V495.0M65.2 122.8V495.0M58.0 127.4V495.0M50.8 133.5V495.0" stroke="#1a2c3d" stroke-width="1.3" opacity=".88" fill="none"/><path d="M115.6 92.2V495.0M122.8 95.3V495.0M130.0 100.0V495.0M137.3 104.6V495.0M144.5 109.3V495.0M151.7 113.9V495.0M158.9 118.6V495.0M166.2 123.2V495.0M173.4 127.9V495.0M180.6 134.0V495.0" stroke="#1a2c3d" stroke-width="1.3" opacity=".88" fill="none"/><path d="M115.6 91.2V495" stroke="#22313f" stroke-width="1.6"/></g></g><g clip-path="url(#t_c_b2)"><g><polygon points="51.0,246.0 -6.0,277.0 -6.0,495.0 51.0,495.0" fill="url(#t_fc)"/><polygon points="51.0,246.0 115.3,291.0 115.3,495.0 51.0,495.0" fill="url(#t_fd)"/><polygon points="51.0,246.0 -6.0,277.0 -6.0,289.2 51.0,258.2" fill="#b4dcf4" opacity=".5"/><polygon points="51.0,246.0 115.3,291.0 115.3,303.2 51.0,258.2" fill="#b4dcf4" opacity=".45"/><path d="M51.0 246.0L-6.0 277.0M51.0 253.6L-6.0 283.8M51.0 261.2L-6.0 290.5M51.0 268.8L-6.0 297.3M51.0 276.4L-6.0 304.1M51.0 284.0L-6.0 310.9M51.0 291.6L-6.0 317.6M51.0 299.2L-6.0 324.4M51.0 306.8L-6.0 331.2M51.0 314.4L-6.0 337.9M51.0 322.0L-6.0 344.7M51.0 329.6L-6.0 351.5M51.0 337.2L-6.0 358.2M51.0 344.8L-6.0 365.0M51.0 352.4L-6.0 371.8M51.0 360.0L-6.0 378.6M51.0 367.6L-6.0 385.3M51.0 375.2L-6.0 392.1M51.0 382.8L-6.0 398.9M51.0 390.4L-6.0 405.6M51.0 398.0L-6.0 412.4M51.0 405.6L-6.0 419.2M51.0 413.2L-6.0 425.9M51.0 420.8L-6.0 432.7M51.0 428.4L-6.0 439.5M51.0 436.0L-6.0 446.3M51.0 443.6L-6.0 453.0M51.0 451.2L-6.0 459.8M51.0 458.8L-6.0 466.6M51.0 466.4L-6.0 473.3M51.0 474.0L-6.0 480.1M51.0 481.6L-6.0 486.9M51.0 489.2L-6.0 493.7M51.0 496.8L-6.0 500.4M51.0 504.4L-6.0 507.2M51.0 512.0L-6.0 514.0M51.0 519.6L-6.0 520.7" stroke="#283e50" stroke-width=".95" opacity=".7" fill="none"/><path d="M51.0 246.0L115.3 291.0M51.0 253.6L115.3 297.4M51.0 261.2L115.3 303.8M51.0 268.8L115.3 310.2M51.0 276.4L115.3 316.6M51.0 284.0L115.3 323.0M51.0 291.6L115.3 329.4M51.0 299.2L115.3 335.8M51.0 306.8L115.3 342.2M51.0 314.4L115.3 348.6M51.0 322.0L115.3 355.0M51.0 329.6L115.3 361.4M51.0 337.2L115.3 367.7M51.0 344.8L115.3 374.1M51.0 352.4L115.3 380.5M51.0 360.0L115.3 386.9M51.0 367.6L115.3 393.3M51.0 375.2L115.3 399.7M51.0 382.8L115.3 406.1M51.0 390.4L115.3 412.5M51.0 398.0L115.3 418.9M51.0 405.6L115.3 425.3M51.0 413.2L115.3 431.7M51.0 420.8L115.3 438.1M51.0 428.4L115.3 444.5M51.0 436.0L115.3 450.9M51.0 443.6L115.3 457.3M51.0 451.2L115.3 463.7M51.0 458.8L115.3 470.1M51.0 466.4L115.3 476.5M51.0 474.0L115.3 482.9M51.0 481.6L115.3 489.3M51.0 489.2L115.3 495.7M51.0 496.8L115.3 502.1M51.0 504.4L115.3 508.5M51.0 512.0L115.3 514.9M51.0 519.6L115.3 521.2M51.0 527.2L115.3 527.6M51.0 534.8L115.3 534.8" stroke="#283e50" stroke-width=".95" opacity=".7" fill="none"/><path d="M51.0 246.0V495.0M43.9 248.4V495.0M36.8 252.2V495.0M29.6 256.1V495.0M22.5 260.0V495.0M15.4 263.9V495.0M8.2 267.8V495.0M1.1 271.6V495.0M-6.0 277.0V495.0" stroke="#1a2c3d" stroke-width="1.3" opacity=".88" fill="none"/><path d="M51.0 246.0V495.0M58.1 249.5V495.0M65.3 254.5V495.0M72.4 259.5V495.0M79.6 264.5V495.0M86.7 269.5V495.0M93.9 274.5V495.0M101.0 279.5V495.0M108.2 284.5V495.0M115.3 291.0V495.0" stroke="#1a2c3d" stroke-width="1.3" opacity=".88" fill="none"/><path d="M51.0 245.0V495" stroke="#22313f" stroke-width="1.6"/></g></g><g clip-path="url(#t_c_b3)"><g><polygon points="182.0,334.0 117.5,373.0 117.5,495.0 182.0,495.0" fill="url(#t_fd)"/><polygon points="182.0,334.0 246.0,375.0 246.0,495.0 182.0,495.0" fill="url(#t_fc)"/><polygon points="182.0,334.0 117.5,373.0 117.5,385.2 182.0,346.2" fill="#b4dcf4" opacity=".5"/><polygon points="182.0,334.0 246.0,375.0 246.0,387.2 182.0,346.2" fill="#b4dcf4" opacity=".45"/><path d="M182.0 334.0L117.5 373.0M182.0 341.6L117.5 379.1M182.0 349.2L117.5 385.2M182.0 356.8L117.5 391.3M182.0 364.4L117.5 397.4M182.0 372.0L117.5 403.4M182.0 379.6L117.5 409.5M182.0 387.2L117.5 415.6M182.0 394.8L117.5 421.7M182.0 402.4L117.5 427.8M182.0 410.0L117.5 433.9M182.0 417.6L117.5 440.0M182.0 425.2L117.5 446.1M182.0 432.8L117.5 452.1M182.0 440.4L117.5 458.2M182.0 448.0L117.5 464.3M182.0 455.6L117.5 470.4M182.0 463.2L117.5 476.5M182.0 470.8L117.5 482.6M182.0 478.4L117.5 488.7M182.0 486.0L117.5 494.8M182.0 493.6L117.5 500.8M182.0 501.2L117.5 506.9M182.0 508.8L117.5 513.0M182.0 516.4L117.5 519.1M182.0 524.0L117.5 525.2M182.0 531.6L117.5 531.6" stroke="#283e50" stroke-width=".95" opacity=".7" fill="none"/><path d="M182.0 334.0L246.0 375.0M182.0 341.6L246.0 381.0M182.0 349.2L246.0 387.0M182.0 356.8L246.0 393.0M182.0 364.4L246.0 399.0M182.0 372.0L246.0 405.1M182.0 379.6L246.0 411.1M182.0 387.2L246.0 417.1M182.0 394.8L246.0 423.1M182.0 402.4L246.0 429.1M182.0 410.0L246.0 435.1M182.0 417.6L246.0 441.1M182.0 425.2L246.0 447.1M182.0 432.8L246.0 453.1M182.0 440.4L246.0 459.1M182.0 448.0L246.0 465.2M182.0 455.6L246.0 471.2M182.0 463.2L246.0 477.2M182.0 470.8L246.0 483.2M182.0 478.4L246.0 489.2M182.0 486.0L246.0 495.2M182.0 493.6L246.0 501.2M182.0 501.2L246.0 507.2M182.0 508.8L246.0 513.2M182.0 516.4L246.0 519.2M182.0 524.0L246.0 525.3M182.0 531.6L246.0 531.6" stroke="#283e50" stroke-width=".95" opacity=".7" fill="none"/><path d="M182.0 334.0V495.0M174.8 336.8V495.0M167.7 341.2V495.0M160.5 345.5V495.0M153.3 349.8V495.0M146.2 354.2V495.0M139.0 358.5V495.0M131.8 362.8V495.0M124.7 367.2V495.0M117.5 373.0V495.0" stroke="#1a2c3d" stroke-width="1.3" opacity=".88" fill="none"/><path d="M182.0 334.0V495.0M189.1 337.1V495.0M196.2 341.6V495.0M203.3 346.2V495.0M210.4 350.7V495.0M217.6 355.3V495.0M224.7 359.8V495.0M231.8 364.4V495.0M238.9 368.9V495.0M246.0 375.0V495.0" stroke="#1a2c3d" stroke-width="1.3" opacity=".88" fill="none"/><path d="M182.0 333.0V495" stroke="#22313f" stroke-width="1.6"/></g></g></svg>
<div class="t" style="left:203.60px;top:571.03px;font-size:11.3px;color:#666a80;letter-spacing:0.6px;-webkit-text-stroke:0.42px #666a80;transform:scaleX(0.7875);">SOFTWARE</div>
<div class="t" style="left:198.60px;top:586.83px;font-size:11.3px;color:#666a80;letter-spacing:0.6px;-webkit-text-stroke:0.42px #666a80;transform:scaleX(0.7843);">HIGHLIGHTS</div>
<div class="a" style="left:84.5px;top:508px;width:188px;height:155.4px;border:1px solid #c79df4"></div>
<div class="t" style="left:171.50px;top:691.74px;font-size:12px;color:#333;transform:scaleX(0.9440);">10</div>
</div></div>
<!-- main viewer -->
<div id="main"><div class="a" style="left:-294px;top:-40px;width:1126px;height:716px">
<!-- previous page bottom strip -->
<div class="pg" style="top:60px;height:76.5px;background:linear-gradient(90deg,#f4f8fe 0%,#f6f8fe 50%,#f4f6fd 100%)"></div>
<svg style="left:366px;top:90px" width="599" height="47" viewBox="366 90 599 47">
<defs>
<pattern id="p9p" width="29.5" height="33.4" patternUnits="userSpaceOnUse" patternTransform="translate(700 60) skewY(-18)">
<rect width="29.5" height="33.4" fill="#b7cfe0"/><rect x="2" y="2" width="18" height="20" fill="#d9e7f2"/><rect x="20" y="5" width="8" height="25" fill="#a3c0d6"/><rect x="2" y="22" width="18" height="9" fill="#c5d9e8"/>
<path d="M0 .5H29.5M.5 0V33.4" stroke="#f1f6fa" stroke-width="1"/>
</pattern>
<linearGradient id="p9f" x1="0" y1="0" x2="1" y2="0"><stop offset="0" stop-color="#f5f8fe" stop-opacity="1"/><stop offset=".03" stop-color="#f5f8fe" stop-opacity=".55"/><stop offset=".1" stop-color="#f5f8fe" stop-opacity=".12"/><stop offset="1" stop-color="#f5f8fe" stop-opacity="0"/></linearGradient><clipPath id="p9c"><polygon points="704,90 965,90 965,136.5 696,136.5 696,112"/></clipPath>
</defs>
<g clip-path="url(#p9c)">
<rect x="696" y="90" width="269" height="46.5" fill="#c6dbea"/>
<g fill="#d9e8f3"><rect x="704" y="90" width="22" height="24"/><rect x="757" y="90" width="18" height="30"/><rect x="793" y="108" width="12" height="28.5"/><rect x="741" y="122" width="20" height="14.5"/><rect x="835" y="90" width="24" height="22"/><rect x="890" y="104" width="26" height="32.5"/></g>
<g fill="#b9d2e4"><rect x="698" y="114" width="24" height="22.5"/><rect x="728" y="98" width="15" height="26"/><rect x="769" y="112" width="22" height="24.5"/><rect x="812" y="96" width="20" height="30"/><rect x="862" y="110" width="24" height="26.5"/><rect x="920" y="92" width="30" height="30"/></g>
<g fill="#eef4fa" opacity=".9"><rect x="722.5" y="90" width="4" height="46.5"/><rect x="752.5" y="90" width="4.5" height="46.5"/><rect x="789" y="90" width="4" height="46.5"/><rect x="741" y="112" width="12" height="9"/><rect x="775" y="90" width="14" height="7"/><rect x="830" y="90" width="4" height="46.5"/><rect x="886" y="90" width="4" height="46.5"/></g>
<g stroke="#9aa7b4" stroke-width=".7" fill="none" opacity=".85"><path d="M692.5 114.5L738 92.5M712 136.5L805 96.5M780 136.5L965 58"/><path d="M714.2 112V136.5M728.4 90V98M743.2 90V124M747.6 104V122M775.6 90V112M777 100V112M792.6 116V136.5M761.5 124V136.5"/></g>
<rect x="694" y="90" width="271" height="46.5" fill="url(#p9f)"/>
</g>
<polygon points="366,90.2 549.5,90.2 565.2,104.7 366,104.7" fill="#4d70f4"/>
<polygon points="549.5,90.2 569,90.2 584,104.7 565.2,104.7" fill="#a9b9fa"/>
<polygon points="569,90.2 585.5,90.2 600.5,104.7 584,104.7" fill="#cfd9fc"/>
<text x="415.6" y="100.6" font-family="Liberation Sans, sans-serif" font-size="8.6" fill="#cdd6fb" textLength="9.2" lengthAdjust="spacingAndGlyphs">07</text>
</svg>
<!-- toolbar strip hides page top -->
<div class="a" style="left:294px;top:40px;width:761px;height:50px;background:#f7f7f7"></div>
<svg style="left:360px;top:50px" width="450" height="34" viewBox="360 50 450 34">
<g fill="none" stroke="#2e2e2e" stroke-width="1.1">
<circle cx="375.5" cy="66.4" r="7.1"/><path d="M371.6 66.4H379.4"/>
<circle cx="508.7" cy="66.4" r="7.1"/><path d="M504.6 66.4H512.8M508.7 62.3V70.5"/>
<path d="M563.6 61.8H574.6M564.4 70.2L569.1 65.2L573.8 70.2"/>
<path d="M607.8 66L613.1 61.2L618.4 66M607.8 71.2L613.1 66.4L618.4 71.2"/>
<path d="M742 61.4L747.3 66.2L752.6 61.4M742 66.6L747.3 71.4L752.6 66.6"/>
<path d="M786.2 62L791.1 67L796 62M785.8 70.6H796.4"/>
</g>
<path d="M466.6 63.6H473.4L470 68.2Z" fill="#8a8a8a"/>
<path d="M538.5 60V70" stroke="#dcdcdc" stroke-width="1"/>
</svg>
<div class="t" style="left:415.80px;top:59.80px;font-size:13px;color:#444;transform:scaleX(0.9147);">18%</div>
<div class="a" style="left:643.5px;top:53px;width:80px;height:24px;background:#fff;border:1px solid #dedede;border-radius:4px"></div>
<div class="t" style="left:657.80px;top:58.45px;font-size:14px;color:#333;transform:scaleX(0.9247);">10</div>
<div class="t" style="left:679.60px;top:58.45px;font-size:14px;color:#333;transform:scaleX(1.0799);">/</div>
<div class="t" style="left:691.80px;top:58.45px;font-size:14px;color:#333;">23</div>
<!-- page 10 -->
<div class="pg" style="top:156px;height:493px;background:radial-gradient(ellipse 48% 40% at 100% 100%,#c0dffb 0%,rgba(198,225,252,.88) 30%,rgba(220,235,253,.5) 62%,rgba(244,246,254,0) 100%),linear-gradient(180deg,#ededfc 0%,#f0f0fd 30%,#f4f5fe 55%,#f7f9ff 100%)"></div>
<svg style="left:366px;top:156px;overflow:hidden" width="288" height="493" viewBox="0 0 288 493"><g><defs>
<linearGradient id="sky" x1="0.1" y1="0" x2="0.2" y2="1">
<stop offset="0" stop-color="#0b1528"/><stop offset=".1" stop-color="#101e39"/><stop offset=".23" stop-color="#192c4a"/><stop offset=".45" stop-color="#253f5f"/><stop offset=".62" stop-color="#314f70"/><stop offset=".8" stop-color="#47708f"/><stop offset="1" stop-color="#709fba"/>
</linearGradient>
<radialGradient id="skyl" cx="0" cy="0.42" r="0.62" gradientTransform="scale(1 1)"><stop offset="0" stop-color="#5d93bd" stop-opacity=".2"/><stop offset=".5" stop-color="#5d93bd" stop-opacity=".1"/><stop offset="1" stop-color="#5d93bd" stop-opacity="0"/></radialGradient>
<linearGradient id="fa" gradientUnits="userSpaceOnUse" x1="0" y1="90" x2="0" y2="493"><stop offset="0" stop-color="#86a6c0"/><stop offset=".3" stop-color="#a2bbcc"/><stop offset="1" stop-color="#afc1cb"/></linearGradient>
<linearGradient id="fb" gradientUnits="userSpaceOnUse" x1="0" y1="90" x2="0" y2="493"><stop offset="0" stop-color="#809fb9"/><stop offset=".25" stop-color="#a6bac8"/><stop offset=".6" stop-color="#c3ced4"/><stop offset="1" stop-color="#c6d0d5"/></linearGradient>
<linearGradient id="fc" gradientUnits="userSpaceOnUse" x1="0" y1="240" x2="0" y2="493"><stop offset="0" stop-color="#8daec6"/><stop offset=".4" stop-color="#a3bbcb"/><stop offset="1" stop-color="#b3c4cd"/></linearGradient>
<linearGradient id="fd" gradientUnits="userSpaceOnUse" x1="0" y1="160" x2="0" y2="493"><stop offset="0" stop-color="#7d9fbb"/><stop offset=".5" stop-color="#93adc0"/><stop offset="1" stop-color="#a8bbc6"/></linearGradient>
<clipPath id="c_b0"><polygon points="-14.0,159.0 -36.0,174.0 -36.0,495.0 -14.0,495.0"/><polygon points="-14.0,159.0 51.0,197.0 51.0,495.0 -14.0,495.0"/></clipPath><clipPath id="c_b1"><polygon points="115.6,92.2 50.8,133.5 50.8,495.0 115.6,495.0"/><polygon points="115.6,92.2 180.6,134.0 180.6,495.0 115.6,495.0"/></clipPath><clipPath id="c_b2"><polygon points="51.0,246.0 -6.0,277.0 -6.0,495.0 51.0,495.0"/><polygon points="51.0,246.0 115.3,291.0 115.3,495.0 51.0,495.0"/></clipPath><clipPath id="c_b3"><polygon points="182.0,334.0 117.5,373.0 117.5,495.0 182.0,495.0"/><polygon points="182.0,334.0 246.0,375.0 246.0,495.0 182.0,495.0"/></clipPath></defs><rect width="288" height="493" fill="url(#sky)"/><rect width="288" height="493" fill="url(#skyl)"/><g clip-path="url(#c_b0)"><g><polygon points="-14.0,159.0 -36.0,174.0 -36.0,495.0 -14.0,495.0" fill="url(#fd)"/><polygon points="-14.0,159.0 51.0,197.0 51.0,495.0 -14.0,495.0" fill="url(#fd)"/><polygon points="-14.0,159.0 -36.0,174.0 -36.0,185.2 -14.0,170.2" fill="#b4dcf4" opacity=".5"/><polygon points="-14.0,159.0 51.0,197.0 51.0,208.2 -14.0,170.2" fill="#b4dcf4" opacity=".45"/><path d="M-14.0 159.0L-36.0 174.0M-14.0 166.0L-36.0 180.7M-14.0 173.0L-36.0 187.4M-14.0 180.0L-36.0 194.2M-14.0 187.0L-36.0 200.9M-14.0 194.0L-36.0 207.6M-14.0 201.0L-36.0 214.3M-14.0 208.0L-36.0 221.0M-14.0 215.0L-36.0 227.7M-14.0 222.0L-36.0 234.5M-14.0 229.0L-36.0 241.2M-14.0 236.0L-36.0 247.9M-14.0 243.0L-36.0 254.6M-14.0 250.0L-36.0 261.3M-14.0 257.0L-36.0 268.0M-14.0 264.0L-36.0 274.8M-14.0 271.0L-36.0 281.5M-14.0 278.0L-36.0 288.2M-14.0 285.0L-36.0 294.9M-14.0 292.0L-36.0 301.6M-14.0 299.0L-36.0 308.3M-14.0 306.0L-36.0 315.1M-14.0 313.0L-36.0 321.8M-14.0 320.0L-36.0 328.5M-14.0 327.0L-36.0 335.2M-14.0 334.0L-36.0 341.9M-14.0 341.0L-36.0 348.6M-14.0 348.0L-36.0 355.4M-14.0 355.0L-36.0 362.1M-14.0 362.0L-36.0 368.8M-14.0 369.0L-36.0 375.5M-14.0 376.0L-36.0 382.2M-14.0 383.0L-36.0 388.9M-14.0 390.0L-36.0 395.7M-14.0 397.0L-36.0 402.4M-14.0 404.0L-36.0 409.1M-14.0 411.0L-36.0 415.8M-14.0 418.0L-36.0 422.5M-14.0 425.0L-36.0 429.2M-14.0 432.0L-36.0 436.0M-14.0 439.0L-36.0 442.7M-14.0 446.0L-36.0 449.4M-14.0 453.0L-36.0 456.1M-14.0 460.0L-36.0 462.8M-14.0 467.0L-36.0 469.5M-14.0 474.0L-36.0 476.3M-14.0 481.0L-36.0 483.0M-14.0 488.0L-36.0 489.7M-14.0 495.0L-36.0 496.4M-14.0 502.0L-36.0 503.1M-14.0 509.0L-36.0 509.8" stroke="#283e50" stroke-width=".95" opacity=".7" fill="none"/><path d="M-14.0 159.0L51.0 197.0M-14.0 166.0L51.0 203.3M-14.0 173.0L51.0 209.6M-14.0 180.0L51.0 215.8M-14.0 187.0L51.0 222.1M-14.0 194.0L51.0 228.4M-14.0 201.0L51.0 234.7M-14.0 208.0L51.0 241.0M-14.0 215.0L51.0 247.3M-14.0 222.0L51.0 253.5M-14.0 229.0L51.0 259.8M-14.0 236.0L51.0 266.1M-14.0 243.0L51.0 272.4M-14.0 250.0L51.0 278.7M-14.0 257.0L51.0 285.0M-14.0 264.0L51.0 291.2M-14.0 271.0L51.0 297.5M-14.0 278.0L51.0 303.8M-14.0 285.0L51.0 310.1M-14.0 292.0L51.0 316.4M-14.0 299.0L51.0 322.7M-14.0 306.0L51.0 328.9M-14.0 313.0L51.0 335.2M-14.0 320.0L51.0 341.5M-14.0 327.0L51.0 347.8M-14.0 334.0L51.0 354.1M-14.0 341.0L51.0 360.4M-14.0 348.0L51.0 366.6M-14.0 355.0L51.0 372.9M-14.0 362.0L51.0 379.2M-14.0 369.0L51.0 385.5M-14.0 376.0L51.0 391.8M-14.0 383.0L51.0 398.1M-14.0 390.0L51.0 404.3M-14.0 397.0L51.0 410.6M-14.0 404.0L51.0 416.9M-14.0 411.0L51.0 423.2M-14.0 418.0L51.0 429.5M-14.0 425.0L51.0 435.8M-14.0 432.0L51.0 442.0M-14.0 439.0L51.0 448.3M-14.0 446.0L51.0 454.6M-14.0 453.0L51.0 460.9M-14.0 460.0L51.0 467.2M-14.0 467.0L51.0 473.5M-14.0 474.0L51.0 479.7M-14.0 481.0L51.0 486.0M-14.0 488.0L51.0 492.3M-14.0 495.0L51.0 498.6M-14.0 502.0L51.0 504.9M-14.0 509.0L51.0 511.2M-14.0 516.0L51.0 517.4M-14.0 523.0L51.0 523.7M-14.0 530.0L51.0 530.0" stroke="#283e50" stroke-width=".95" opacity=".7" fill="none"/><path d="M-14.0 159.0V495.0M-21.3 162.5V495.0M-28.7 167.5V495.0M-36.0 174.0V495.0" stroke="#1a2c3d" stroke-width="1.3" opacity=".88" fill="none"/><path d="M-14.0 159.0V495.0M-6.8 161.7V495.0M0.4 165.9V495.0M7.7 170.2V495.0M14.9 174.4V495.0M22.1 178.6V495.0M29.3 182.8V495.0M36.6 187.1V495.0M43.8 191.3V495.0M51.0 197.0V495.0" stroke="#1a2c3d" stroke-width="1.3" opacity=".88" fill="none"/><path d="M-14.0 158.0V495" stroke="#22313f" stroke-width="1.6"/></g></g><g clip-path="url(#c_b1)"><g><polygon points="115.6,92.2 50.8,133.5 50.8,495.0 115.6,495.0" fill="url(#fa)"/><polygon points="115.6,92.2 180.6,134.0 180.6,495.0 115.6,495.0" fill="url(#fb)"/><polygon points="115.6,92.2 50.8,133.5 50.8,144.5 115.6,103.2" fill="#b4dcf4" opacity=".5"/><polygon points="115.6,92.2 180.6,134.0 180.6,145.0 115.6,103.2" fill="#b4dcf4" opacity=".45"/><path d="M115.6 92.2L50.8 133.5M115.6 99.1L50.8 139.7M115.6 106.0L50.8 146.0M115.6 112.9L50.8 152.2M115.6 119.8L50.8 158.5M115.6 126.7L50.8 164.7M115.6 133.6L50.8 171.0M115.6 140.5L50.8 177.2M115.6 147.4L50.8 183.5M115.6 154.3L50.8 189.7M115.6 161.2L50.8 196.0M115.6 168.1L50.8 202.2M115.6 175.0L50.8 208.5M115.6 181.9L50.8 214.7M115.6 188.8L50.8 221.0M115.6 195.7L50.8 227.2M115.6 202.6L50.8 233.5M115.6 209.5L50.8 239.7M115.6 216.4L50.8 246.0M115.6 223.3L50.8 252.2M115.6 230.2L50.8 258.5M115.6 237.1L50.8 264.7M115.6 244.0L50.8 271.0M115.6 250.9L50.8 277.2M115.6 257.8L50.8 283.5M115.6 264.7L50.8 289.7M115.6 271.6L50.8 296.0M115.6 278.5L50.8 302.2M115.6 285.4L50.8 308.5M115.6 292.3L50.8 314.7M115.6 299.2L50.8 321.0M115.6 306.1L50.8 327.2M115.6 313.0L50.8 333.5M115.6 319.9L50.8 339.7M115.6 326.8L50.8 346.0M115.6 333.7L50.8 352.2M115.6 340.6L50.8 358.5M115.6 347.5L50.8 364.7M115.6 354.4L50.8 371.0M115.6 361.3L50.8 377.2M115.6 368.2L50.8 383.5M115.6 375.1L50.8 389.7M115.6 382.0L50.8 396.0M115.6 388.9L50.8 402.2M115.6 395.8L50.8 408.5M115.6 402.7L50.8 414.7M115.6 409.6L50.8 421.0M115.6 416.5L50.8 427.2M115.6 423.4L50.8 433.5M115.6 430.3L50.8 439.7M115.6 437.2L50.8 446.0M115.6 444.1L50.8 452.2M115.6 451.0L50.8 458.5M115.6 457.9L50.8 464.7M115.6 464.8L50.8 471.0M115.6 471.7L50.8 477.2M115.6 478.6L50.8 483.4M115.6 485.5L50.8 489.7M115.6 492.4L50.8 495.9M115.6 499.3L50.8 502.2M115.6 506.2L50.8 508.4M115.6 513.1L50.8 514.7M115.6 520.0L50.8 520.9M115.6 526.9L50.8 527.2M115.6 533.8L50.8 533.8" stroke="#283e50" stroke-width=".95" opacity=".7" fill="none"/><path d="M115.6 92.2L180.6 134.0M115.6 99.1L180.6 140.2M115.6 106.0L180.6 146.5M115.6 112.9L180.6 152.7M115.6 119.8L180.6 159.0M115.6 126.7L180.6 165.2M115.6 133.6L180.6 171.4M115.6 140.5L180.6 177.7M115.6 147.4L180.6 183.9M115.6 154.3L180.6 190.2M115.6 161.2L180.6 196.4M115.6 168.1L180.6 202.7M115.6 175.0L180.6 208.9M115.6 181.9L180.6 215.1M115.6 188.8L180.6 221.4M115.6 195.7L180.6 227.6M115.6 202.6L180.6 233.9M115.6 209.5L180.6 240.1M115.6 216.4L180.6 246.3M115.6 223.3L180.6 252.6M115.6 230.2L180.6 258.8M115.6 237.1L180.6 265.1M115.6 244.0L180.6 271.3M115.6 250.9L180.6 277.5M115.6 257.8L180.6 283.8M115.6 264.7L180.6 290.0M115.6 271.6L180.6 296.3M115.6 278.5L180.6 302.5M115.6 285.4L180.6 308.8M115.6 292.3L180.6 315.0M115.6 299.2L180.6 321.2M115.6 306.1L180.6 327.5M115.6 313.0L180.6 333.7M115.6 319.9L180.6 340.0M115.6 326.8L180.6 346.2M115.6 333.7L180.6 352.4M115.6 340.6L180.6 358.7M115.6 347.5L180.6 364.9M115.6 354.4L180.6 371.2M115.6 361.3L180.6 377.4M115.6 368.2L180.6 383.6M115.6 375.1L180.6 389.9M115.6 382.0L180.6 396.1M115.6 388.9L180.6 402.4M115.6 395.8L180.6 408.6M115.6 402.7L180.6 414.9M115.6 409.6L180.6 421.1M115.6 416.5L180.6 427.3M115.6 423.4L180.6 433.6M115.6 430.3L180.6 439.8M115.6 437.2L180.6 446.1M115.6 444.1L180.6 452.3M115.6 451.0L180.6 458.5M115.6 457.9L180.6 464.8M115.6 464.8L180.6 471.0M115.6 471.7L180.6 477.3M115.6 478.6L180.6 483.5M115.6 485.5L180.6 489.7M115.6 492.4L180.6 496.0M115.6 499.3L180.6 502.2M115.6 506.2L180.6 508.5M115.6 513.1L180.6 514.7M115.6 520.0L180.6 521.0M115.6 526.9L180.6 527.2M115.6 533.8L180.6 533.8" stroke="#283e50" stroke-width=".95" opacity=".7" fill="none"/><path d="M115.6 92.2V495.0M108.4 95.3V495.0M101.2 99.9V495.0M94.0 104.5V495.0M86.8 109.1V495.0M79.6 113.6V495.0M72.4 118.2V495.0M65.2 122.8V495.0M58.0 127.4V495.0M50.8 133.5V495.0" stroke="#1a2c3d" stroke-width="1.3" opacity=".88" fill="none"/><path d="M115.6 92.2V495.0M122.8 95.3V495.0M130.0 100.0V495.0M137.3 104.6V495.0M144.5 109.3V495.0M151.7 113.9V495.0M158.9 118.6V495.0M166.2 123.2V495.0M173.4 127.9V495.0M180.6 134.0V495.0" stroke="#1a2c3d" stroke-width="1.3" opacity=".88" fill="none"/><path d="M115.6 91.2V495" stroke="#22313f" stroke-width="1.6"/></g></g><g clip-path="url(#c_b2)"><g><polygon points="51.0,246.0 -6.0,277.0 -6.0,495.0 51.0,495.0" fill="url(#fc)"/><polygon points="51.0,246.0 115.3,291.0 115.3,495.0 51.0,495.0" fill="url(#fd)"/><polygon points="51.0,246.0 -6.0,277.0 -6.0,289.2 51.0,258.2" fill="#b4dcf4" opacity=".5"/><polygon points="51.0,246.0 115.3,291.0 115.3,303.2 51.0,258.2" fill="#b4dcf4" opacity=".45"/><path d="M51.0 246.0L-6.0 277.0M51.0 253.6L-6.0 283.8M51.0 261.2L-6.0 290.5M51.0 268.8L-6.0 297.3M51.0 276.4L-6.0 304.1M51.0 284.0L-6.0 310.9M51.0 291.6L-6.0 317.6M51.0 299.2L-6.0 324.4M51.0 306.8L-6.0 331.2M51.0 314.4L-6.0 337.9M51.0 322.0L-6.0 344.7M51.0 329.6L-6.0 351.5M51.0 337.2L-6.0 358.2M51.0 344.8L-6.0 365.0M51.0 352.4L-6.0 371.8M51.0 360.0L-6.0 378.6M51.0 367.6L-6.0 385.3M51.0 375.2L-6.0 392.1M51.0 382.8L-6.0 398.9M51.0 390.4L-6.0 405.6M51.0 398.0L-6.0 412.4M51.0 405.6L-6.0 419.2M51.0 413.2L-6.0 425.9M51.0 420.8L-6.0 432.7M51.0 428.4L-6.0 439.5M51.0 436.0L-6.0 446.3M51.0 443.6L-6.0 453.0M51.0 451.2L-6.0 459.8M51.0 458.8L-6.0 466.6M51.0 466.4L-6.0 473.3M51.0 474.0L-6.0 480.1M51.0 481.6L-6.0 486.9M51.0 489.2L-6.0 493.7M51.0 496.8L-6.0 500.4M51.0 504.4L-6.0 507.2M51.0 512.0L-6.0 514.0M51.0 519.6L-6.0 520.7" stroke="#283e50" stroke-width=".95" opacity=".7" fill="none"/><path d="M51.0 246.0L115.3 291.0M51.0 253.6L115.3 297.4M51.0 261.2L115.3 303.8M51.0 268.8L115.3 310.2M51.0 276.4L115.3 316.6M51.0 284.0L115.3 323.0M51.0 291.6L115.3 329.4M51.0 299.2L115.3 335.8M51.0 306.8L115.3 342.2M51.0 314.4L115.3 348.6M51.0 322.0L115.3 355.0M51.0 329.6L115.3 361.4M51.0 337.2L115.3 367.7M51.0 344.8L115.3 374.1M51.0 352.4L115.3 380.5M51.0 360.0L115.3 386.9M51.0 367.6L115.3 393.3M51.0 375.2L115.3 399.7M51.0 382.8L115.3 406.1M51.0 390.4L115.3 412.5M51.0 398.0L115.3 418.9M51.0 405.6L115.3 425.3M51.0 413.2L115.3 431.7M51.0 420.8L115.3 438.1M51.0 428.4L115.3 444.5M51.0 436.0L115.3 450.9M51.0 443.6L115.3 457.3M51.0 451.2L115.3 463.7M51.0 458.8L115.3 470.1M51.0 466.4L115.3 476.5M51.0 474.0L115.3 482.9M51.0 481.6L115.3 489.3M51.0 489.2L115.3 495.7M51.0 496.8L115.3 502.1M51.0 504.4L115.3 508.5M51.0 512.0L115.3 514.9M51.0 519.6L115.3 521.2M51.0 527.2L115.3 527.6M51.0 534.8L115.3 534.8" stroke="#283e50" stroke-width=".95" opacity=".7" fill="none"/><path d="M51.0 246.0V495.0M43.9 248.4V495.0M36.8 252.2V495.0M29.6 256.1V495.0M22.5 260.0V495.0M15.4 263.9V495.0M8.2 267.8V495.0M1.1 271.6V495.0M-6.0 277.0V495.0" stroke="#1a2c3d" stroke-width="1.3" opacity=".88" fill="none"/><path d="M51.0 246.0V495.0M58.1 249.5V495.0M65.3 254.5V495.0M72.4 259.5V495.0M79.6 264.5V495.0M86.7 269.5V495.0M93.9 274.5V495.0M101.0 279.5V495.0M108.2 284.5V495.0M115.3 291.0V495.0" stroke="#1a2c3d" stroke-width="1.3" opacity=".88" fill="none"/><path d="M51.0 245.0V495" stroke="#22313f" stroke-width="1.6"/></g></g><g clip-path="url(#c_b3)"><g><polygon points="182.0,334.0 117.5,373.0 117.5,495.0 182.0,495.0" fill="url(#fd)"/><polygon points="182.0,334.0 246.0,375.0 246.0,495.0 182.0,495.0" fill="url(#fc)"/><polygon points="182.0,334.0 117.5,373.0 117.5,385.2 182.0,346.2" fill="#b4dcf4" opacity=".5"/><polygon points="182.0,334.0 246.0,375.0 246.0,387.2 182.0,346.2" fill="#b4dcf4" opacity=".45"/><path d="M182.0 334.0L117.5 373.0M182.0 341.6L117.5 379.1M182.0 349.2L117.5 385.2M182.0 356.8L117.5 391.3M182.0 364.4L117.5 397.4M182.0 372.0L117.5 403.4M182.0 379.6L117.5 409.5M182.0 387.2L117.5 415.6M182.0 394.8L117.5 421.7M182.0 402.4L117.5 427.8M182.0 410.0L117.5 433.9M182.0 417.6L117.5 440.0M182.0 425.2L117.5 446.1M182.0 432.8L117.5 452.1M182.0 440.4L117.5 458.2M182.0 448.0L117.5 464.3M182.0 455.6L117.5 470.4M182.0 463.2L117.5 476.5M182.0 470.8L117.5 482.6M182.0 478.4L117.5 488.7M182.0 486.0L117.5 494.8M182.0 493.6L117.5 500.8M182.0 501.2L117.5 506.9M182.0 508.8L117.5 513.0M182.0 516.4L117.5 519.1M182.0 524.0L117.5 525.2M182.0 531.6L117.5 531.6" stroke="#283e50" stroke-width=".95" opacity=".7" fill="none"/><path d="M182.0 334.0L246.0 375.0M182.0 341.6L246.0 381.0M182.0 349.2L246.0 387.0M182.0 356.8L246.0 393.0M182.0 364.4L246.0 399.0M182.0 372.0L246.0 405.1M182.0 379.6L246.0 411.1M182.0 387.2L246.0 417.1M182.0 394.8L246.0 423.1M182.0 402.4L246.0 429.1M182.0 410.0L246.0 435.1M182.0 417.6L246.0 441.1M182.0 425.2L246.0 447.1M182.0 432.8L246.0 453.1M182.0 440.4L246.0 459.1M182.0 448.0L246.0 465.2M182.0 455.6L246.0 471.2M182.0 463.2L246.0 477.2M182.0 470.8L246.0 483.2M182.0 478.4L246.0 489.2M182.0 486.0L246.0 495.2M182.0 493.6L246.0 501.2M182.0 501.2L246.0 507.2M182.0 508.8L246.0 513.2M182.0 516.4L246.0 519.2M182.0 524.0L246.0 525.3M182.0 531.6L246.0 531.6" stroke="#283e50" stroke-width=".95" opacity=".7" fill="none"/><path d="M182.0 334.0V495.0M174.8 336.8V495.0M167.7 341.2V495.0M160.5 345.5V495.0M153.3 349.8V495.0M146.2 354.2V495.0M139.0 358.5V495.0M131.8 362.8V495.0M124.7 367.2V495.0M117.5 373.0V495.0" stroke="#1a2c3d" stroke-width="1.3" opacity=".88" fill="none"/><path d="M182.0 334.0V495.0M189.1 337.1V495.0M196.2 341.6V495.0M203.3 346.2V495.0M210.4 350.7V495.0M217.6 355.3V495.0M224.7 359.8V495.0M231.8 364.4V495.0M238.9 368.9V495.0M246.0 375.0V495.0" stroke="#1a2c3d" stroke-width="1.3" opacity=".88" fill="none"/><path d="M182.0 333.0V495" stroke="#22313f" stroke-width="1.6"/></g></g></g></svg>
<div class="t" style="left:747.40px;top:355.48px;font-size:34.4px;color:#5e6180;letter-spacing:2.4px;-webkit-text-stroke:1.1px #5e6180;transform:scaleX(0.8154);">SOFTWARE</div>
<div class="t" style="left:731.60px;top:406.18px;font-size:34.4px;color:#5e6180;letter-spacing:2.4px;-webkit-text-stroke:1.1px #5e6180;transform:scaleX(0.8091);">HIGHLIGHTS</div>
<!-- page 11 top -->
<div class="pg" style="top:670px;height:60px;background:linear-gradient(90deg,#e4effd 0%,#f0f6fe 18%,#fbfcff 40%,#ffffff 100%)"></div>
</div></div>
<!-- right toolbar -->
<div id="rtool"></div>
<div class="sep" style="left:1077px;top:92px;width:10px"></div>
<div class="sep" style="left:1077px;top:309px;width:10px"></div>
<div class="sep" style="left:1077px;top:366px;width:10px"></div>
<div class="a" style="left:1070.5px;top:145.5px;width:24px;height:30px;background:#d8d8d8;border-radius:3px"></div>
<svg style="left:1054px;top:40px" width="56" height="676" viewBox="1054 40 56 676">
<g fill="none" stroke="#2e2e2e" stroke-width="1.15" stroke-linecap="round" stroke-linejoin="round">
<!-- search -->
<circle cx="1080.8" cy="62.5" r="5.6"/><path d="M1085.4 67L1090.2 71.6" stroke-width="2.3"/><path d="M1078.3 60.6Q1077.7 61.6 1078 62.8" stroke-width=".9"/>
<!-- ocr -->
<path d="M1075.2 116.6V114.2Q1075.2 112.6 1076.8 112.6H1088.2Q1089.8 112.6 1089.8 114.2V116.6"/><path d="M1073.4 116.8H1091.8"/><path d="M1075.2 119.4V127Q1075.2 128.6 1076.8 128.6H1088.2Q1089.8 128.6 1089.8 127V119.4"/>
<!-- convert -->
<path d="M1075.6 154.2Q1075.6 152.8 1077 152.8H1085L1089 156.8V168.2Q1089 169.6 1087.6 169.6H1077Q1075.6 169.6 1075.6 168.2Z"/><path d="M1085 153V156.8H1088.8" stroke-width=".9"/>
<path d="M1078.9 161.2A3.5 3.5 0 0 1 1085.2 159.4M1085.6 157.4V159.8H1083.2" stroke-width="1.05"/><path d="M1085.7 162.4A3.5 3.5 0 0 1 1079.4 164.2M1079 166.2V163.8H1081.4" stroke-width="1.05"/>
<!-- protect -->
<path d="M1081.4 209.4H1076.8Q1075.4 209.4 1075.4 208V194Q1075.4 192.6 1076.8 192.6H1084L1088 196.6V199.4"/><path d="M1084 192.8V196.6H1087.8" stroke-width=".9"/>
<rect x="1082.8" y="203.2" width="7" height="6.2" rx="1"/><path d="M1084.4 203V201.6Q1084.4 199.8 1086.3 199.8Q1088.2 199.8 1088.2 201.6V203"/><circle cx="1086.3" cy="206.2" r=".5" fill="#2e2e2e"/>
<!-- share -->
<path d="M1079.2 239.8H1077Q1075.4 239.8 1075.4 241.4V247.8Q1075.4 249.4 1077 249.4H1088Q1089.6 249.4 1089.6 247.8V241.4Q1089.6 239.8 1088 239.8H1085.8"/><path d="M1082.5 244.6V233.6M1079 236.8L1082.5 233.2L1086 236.8"/>
<!-- email -->
<rect x="1074.6" y="274.8" width="15.2" height="12.6" rx="1.8"/><path d="M1077.4 278.8L1082.2 282.6L1087 278.8"/>
<!-- save -->
<rect x="1075.4" y="330.2" width="13.4" height="14.4" rx="2.2"/><path d="M1079.2 330.4V333.2H1085V330.4"/><circle cx="1082.1" cy="338.6" r="2.3"/>
</g>
<g fill="none" stroke="#c2c2c2" stroke-width="1.15" stroke-linecap="round" stroke-linejoin="round">
<path d="M1080.4 389.6L1077 392.6L1080.4 395.6M1077.2 392.6H1084Q1087.6 392.6 1087.6 396.2Q1087.6 399.8 1084 399.8H1079"/>
<path d="M1083.8 429.2L1087.2 432.2L1083.8 435.2M1087 432.2H1080.2Q1076.6 432.2 1076.6 435.8Q1076.6 439.4 1080.2 439.4H1085.2"/>
</g>
<!-- OCR text -->
<text x="1082.5" y="125.9" font-family="Liberation Sans, sans-serif" font-size="6.3" font-weight="bold" fill="#2e2e2e" text-anchor="middle" textLength="11.4" lengthAdjust="spacingAndGlyphs">OCR</text>
<!-- AI clover -->
<g fill="none" stroke-width="1.9" stroke-linecap="round">
<path d="M1081.8 647.6A3.9 3.9 0 1 0 1077 652.2" stroke="#a674f4"/>
<path d="M1086.8 652.2A3.9 3.9 0 1 0 1081.9 647.6" stroke="#3aa4f2"/>
<path d="M1081.9 656.6A3.9 3.9 0 1 0 1086.8 652" stroke="#32c98f"/>
<path d="M1077 652A3.9 3.9 0 1 0 1081.8 656.6" stroke="#f8c322"/>
</g>
<!-- comment -->
<g fill="none" stroke="#2a2a2a" stroke-width="1.25" stroke-linejoin="round"><path d="M1075.7 685.6Q1075.7 684.4 1076.9 684.4H1088.3Q1089.5 684.4 1089.5 685.6V695.2Q1089.5 696.4 1088.3 696.4H1085L1082.5 699.6L1080 696.4H1076.9Q1075.7 696.4 1075.7 695.2Z"/><path d="M1078.3 688.3H1087M1078.3 690.5H1087M1078.3 692.6H1083.6" stroke-width="1"/></g>
</svg>
<!-- export panel -->
<div id="panel"></div>
<div class="t" style="left:822.20px;top:59.35px;font-size:14px;color:#262626;font-weight:bold;transform:scaleX(0.9170);">PDF exporteren</div>
<div class="t" style="left:822.20px;top:85.23px;font-size:10.6px;color:#9b9b9b;transform:scaleX(0.9149);">Exporteer uw PDF naar elk formaat</div>
<div class="sep" style="left:822px;top:105px;width:218px;background:#e2e2e2"></div>
<div class="it" style="top:114px"></div>
<div class="it" style="top:162px"></div>
<div class="it" style="top:211px"></div>
<div class="it" style="top:259px"></div>
<div class="it" style="top:308px"></div>
<div class="it" style="top:356px"></div>
<div class="it" style="top:404px"></div>
<div class="it" style="top:453px"></div>
<div class="it" style="top:501px"></div>
<div class="t" style="left:862.20px;top:128.70px;font-size:13px;color:#363636;transform:scaleX(0.9236);">Word (.docx)</div>
<div class="t" style="left:862.20px;top:176.70px;font-size:13px;color:#363636;transform:scaleX(0.9230);">PowerPoint (.pptx)</div>
<div class="t" style="left:862.20px;top:225.70px;font-size:13px;color:#363636;transform:scaleX(0.8564);">Excel (.xlsx)</div>
<div class="t" style="left:862.20px;top:273.70px;font-size:13px;color:#363636;transform:scaleX(0.8082);">CSV (.csv)</div>
<div class="t" style="left:862.20px;top:322.70px;font-size:13px;color:#363636;transform:scaleX(0.8944);">Rich Text Format (.rtf)</div>
<div class="t" style="left:862.20px;top:370.70px;font-size:13px;color:#363636;transform:scaleX(0.8891);">Tekst (.txt)</div>
<div class="t" style="left:862.20px;top:418.70px;font-size:13px;color:#363636;transform:scaleX(0.9277);">Afbeelding</div>
<div class="t" style="left:862.20px;top:467.70px;font-size:13px;color:#363636;transform:scaleX(0.9062);">XML (.xml)</div>
<div class="t" style="left:862.20px;top:515.70px;font-size:13px;color:#363636;transform:scaleX(0.9184);">HTML (.html)</div>
<!-- panel icons -->
<svg style="left:0;top:0" width="1126" height="716" viewBox="0 0 1126 716" font-family="Liberation Sans, sans-serif">
<path d="M843 128.4H848.8Q850 128.4 850 129.6V140.6Q850 141.8 848.8 141.8H843" fill="#fff" stroke="#2a2a2a" stroke-width="1.1"/><path d="M844.6 132.1H848.2M844.6 135.1H848.2M844.6 138.1H848.2" stroke="#bdbdbd" stroke-width=".8"/><path d="M834.2 128.0L843.2 126.1V144.1L834.2 142.2Z" fill="#2a2a2a" stroke="#2a2a2a" stroke-width=".6" stroke-linejoin="round"/><text x="838.6" y="137.5" font-size="6.8" font-weight="bold" fill="#fff" text-anchor="middle">W</text>
<path d="M843 176.4H848.8Q850 176.4 850 177.6V188.6Q850 189.8 848.8 189.8H843" fill="#fff" stroke="#2a2a2a" stroke-width="1.1"/><path d="M844.6 180.1H848.2M844.6 183.1H848.2M844.6 186.1H848.2" stroke="#bdbdbd" stroke-width=".8"/><path d="M834.2 176.0L843.2 174.1V192.1L834.2 190.2Z" fill="#2a2a2a" stroke="#2a2a2a" stroke-width=".6" stroke-linejoin="round"/><text x="838.6" y="185.5" font-size="6.8" font-weight="bold" fill="#fff" text-anchor="middle">P</text>
<path d="M843 225.4H848.8Q850 225.4 850 226.6V237.6Q850 238.8 848.8 238.8H843" fill="#fff" stroke="#2a2a2a" stroke-width="1.1"/><path d="M844.6 229.1H848.2M844.6 232.1H848.2M844.6 235.1H848.2" stroke="#bdbdbd" stroke-width=".8"/><path d="M834.2 225.0L843.2 223.1V241.1L834.2 239.2Z" fill="#2a2a2a" stroke="#2a2a2a" stroke-width=".6" stroke-linejoin="round"/><text x="838.6" y="234.5" font-size="6.8" font-weight="bold" fill="#fff" text-anchor="middle">X</text>
<path d="M838.2 277.7V271.9Q838.2 270.7 839.4 270.7H846.4L850.6 275.1V288.1Q850.6 289.3 849.4 289.3H839.4Q838.2 289.3 838.2 288.1V286.3" fill="#fff" stroke="#2a2a2a" stroke-width="1.1" stroke-linejoin="round"/><path d="M846.4 270.9V275.1H850.4" fill="none" stroke="#2a2a2a" stroke-width=".9"/><rect x="832.0" y="278.0" width="14.2" height="8.4" rx=".8" fill="#2a2a2a"/><text x="839.1" y="284.1" font-size="5.3" font-weight="bold" fill="#fff" text-anchor="middle">CSV</text>
<path d="M838.2 326.7V320.9Q838.2 319.7 839.4 319.7H846.4L850.6 324.1V337.1Q850.6 338.3 849.4 338.3H839.4Q838.2 338.3 838.2 337.1V335.3" fill="#fff" stroke="#2a2a2a" stroke-width="1.1" stroke-linejoin="round"/><path d="M846.4 319.9V324.1H850.4" fill="none" stroke="#2a2a2a" stroke-width=".9"/><rect x="832.0" y="327.0" width="14.2" height="8.4" rx=".8" fill="#2a2a2a"/><text x="839.1" y="333.1" font-size="5.3" font-weight="bold" fill="#fff" text-anchor="middle">RTF</text>
<path d="M838.2 374.7V368.9Q838.2 367.7 839.4 367.7H846.4L850.6 372.1V385.1Q850.6 386.3 849.4 386.3H839.4Q838.2 386.3 838.2 385.1V383.3" fill="#fff" stroke="#2a2a2a" stroke-width="1.1" stroke-linejoin="round"/><path d="M846.4 367.9V372.1H850.4" fill="none" stroke="#2a2a2a" stroke-width=".9"/>
<rect x="832.5" y="371.0" width="9.5" height="11.5" fill="#fff"/><path d="M843.6 374.8H848M843.6 378.1H848M843.6 381.4H848" stroke="#bdbdbd" stroke-width=".8"/><text x="837.3" y="382.5" font-family="Liberation Serif, serif" font-size="13" font-weight="bold" fill="#2a2a2a" text-anchor="middle">T</text>
<g fill="#fff" stroke="#2a2a2a" stroke-width="1.1" stroke-linejoin="round"><rect x="835.6" y="417.6" width="15" height="11.6" rx="1.6" transform="rotate(8 843 423.5)"/><rect x="833.4" y="420.8" width="15.4" height="12" rx="1.6"/></g><path d="M834 430.6L838.4 427.6Q839.2 427.2 840 427.7L840.9 428.6L845.6 424.6Q846.4 424.1 847.2 424.7L848.4 426.2V431.4Q848.4 432.4 847.2 432.4H835.2Q834 432.4 834 431.4Z" fill="#2a2a2a"/><circle cx="837.1" cy="423.8" r="1.15" fill="#2a2a2a"/>
<path d="M838.2 471.7V465.9Q838.2 464.7 839.4 464.7H846.4L850.6 469.1V482.1Q850.6 483.3 849.4 483.3H839.4Q838.2 483.3 838.2 482.1V480.3" fill="#fff" stroke="#2a2a2a" stroke-width="1.1" stroke-linejoin="round"/><path d="M846.4 464.9V469.1H850.4" fill="none" stroke="#2a2a2a" stroke-width=".9"/><rect x="832.0" y="472.0" width="14.2" height="8.4" rx=".8" fill="#2a2a2a"/><text x="839.1" y="478.2" font-size="5.6" font-weight="bold" fill="#fff" text-anchor="middle">&lt;/&gt;</text>
<path d="M838.2 519.7V513.9Q838.2 512.7 839.4 512.7H846.4L850.6 517.1V530.1Q850.6 531.3 849.4 531.3H839.4Q838.2 531.3 838.2 530.1V528.3" fill="#fff" stroke="#2a2a2a" stroke-width="1.1" stroke-linejoin="round"/><path d="M846.4 512.9V517.1H850.4" fill="none" stroke="#2a2a2a" stroke-width=".9"/><rect x="833.0" y="518.9" width="8.2" height="8.9" rx=".8" fill="#2a2a2a"/><text x="837.1" y="525.6" font-size="6.2" font-weight="bold" fill="#fff" text-anchor="middle">H</text>
</svg>
<!-- annotation overlay -->
<svg style="left:0;top:0" width="1126" height="716" viewBox="0 0 1126 716">
<rect x="1068.1" y="143.1" width="29" height="34.4" fill="none" stroke="#3b40c9" stroke-width="4.6" stroke-linejoin="round"/>
<rect x="1070.9" y="145.9" width="23.4" height="28.8" fill="none" stroke="#eceeff" stroke-width=".8" opacity=".8"/>
<rect x="819.4" y="498.2" width="225.9" height="49" fill="none" stroke="#3b40c9" stroke-width="4.6" stroke-linejoin="round"/>
<polygon points="1065.5,183.4 1067.0,183.8 1051,270.5 1036.8,340 1010.5,473.6 1015,474.4 1001.6,491.4 995.6,470.6 1001.1,471.8 1029.4,340 1045.5,270.5" fill="#3b40c9" stroke="#3b40c9" stroke-width=".6" stroke-linejoin="round"/>
</svg>
<!-- frame edges -->
<div class="a" style="left:1125px;top:6px;width:1px;height:704px;background:#4a4a4a"></div>
<div class="a" style="left:0;top:714px;width:1126px;height:1px;background:#6a6a6a;opacity:.55"></div>
<div class="a" style="left:0;top:715px;width:1126px;height:1px;background:#959595"></div>
<svg style="left:1116px;top:706px" width="10" height="10" viewBox="0 0 10 10"><path d="M10 0V10H0V8.6Q8.6 8.6 8.8 0Z" fill="#b9b9b9"/></svg>
</div>
</body>
</html>
